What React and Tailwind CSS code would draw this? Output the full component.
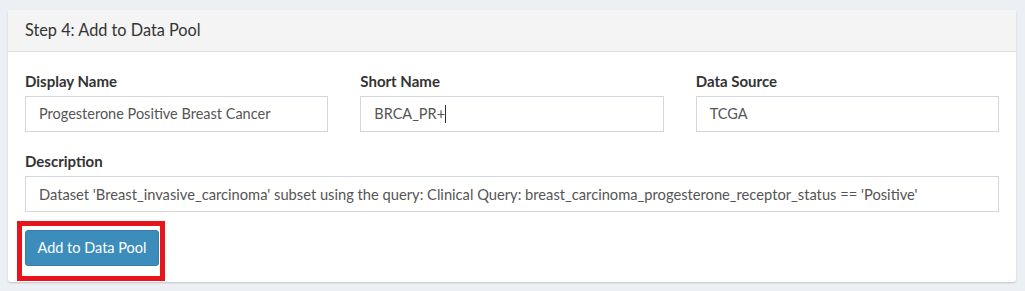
import React from 'react';

const field = 'h-[36px] border border-[#d2d6de] bg-white px-[13px] flex items-center text-[14.5px] text-[#555] whitespace-nowrap overflow-hidden';
const label = 'block h-[20px] leading-[20px] mb-[5px] text-[15px] font-bold text-[#333]';

export default function App() {
  return (
    <div className="min-h-[291px] bg-[#ecf0f5] pt-[10px] pl-[8px] pr-[9px] pb-[8px]" style={{ fontFamily: 'Lato, "Open Sans", sans-serif' }}>
      <div className="bg-white rounded-[3px] shadow-[0_1px_2px_rgba(0,0,0,0.18)]">
        <div className="h-[42px] bg-[#f4f4f4] border-b border-[#dcdcdc] rounded-t-[3px] px-[17px] flex items-center">
          <h3 className="text-[16.3px] text-[#333]">Step 4: Add to Data Pool</h3>
        </div>
        <div className="px-[17px] pt-[19px] pb-[16px]">
          <div className="grid grid-cols-3 gap-x-[32px]">
            <div>
              <label className={label}>Display Name</label>
              <div className={field}>Progesterone Positive Breast Cancer</div>
            </div>
            <div>
              <label className={label}>Short Name</label>
              <div className={`${field} border-[#3c8dbc]`}>
                BRCA_PR+<span className="inline-block w-px h-[18px] bg-[#333]" />
              </div>
            </div>
            <div>
              <label className={label}>Data Source</label>
              <div className={field}>TCGA</div>
            </div>
          </div>
          <div className="mt-[19px]">
            <label className={label}>Description</label>
            <div className={`${field} text-[14.7px]`}>
              Dataset 'Breast_invasive_carcinoma' subset using the query: Clinical Query: breast_carcinoma_progesterone_receptor_status == 'Positive'
            </div>
          </div>
          <div className="mt-[18px] relative w-[134px]">
            <button className="w-[134px] h-[36px] bg-[#3c8dbc] border border-[#367fa9] rounded-[3px] text-white text-[14.5px]">
              Add to Data Pool
            </button>
            <div className="absolute left-[-8px] top-[-9px] w-[148px] h-[60px] border-[5px] border-[#e8141c] pointer-events-none" />
          </div>
        </div>
      </div>
    </div>
  );
}
